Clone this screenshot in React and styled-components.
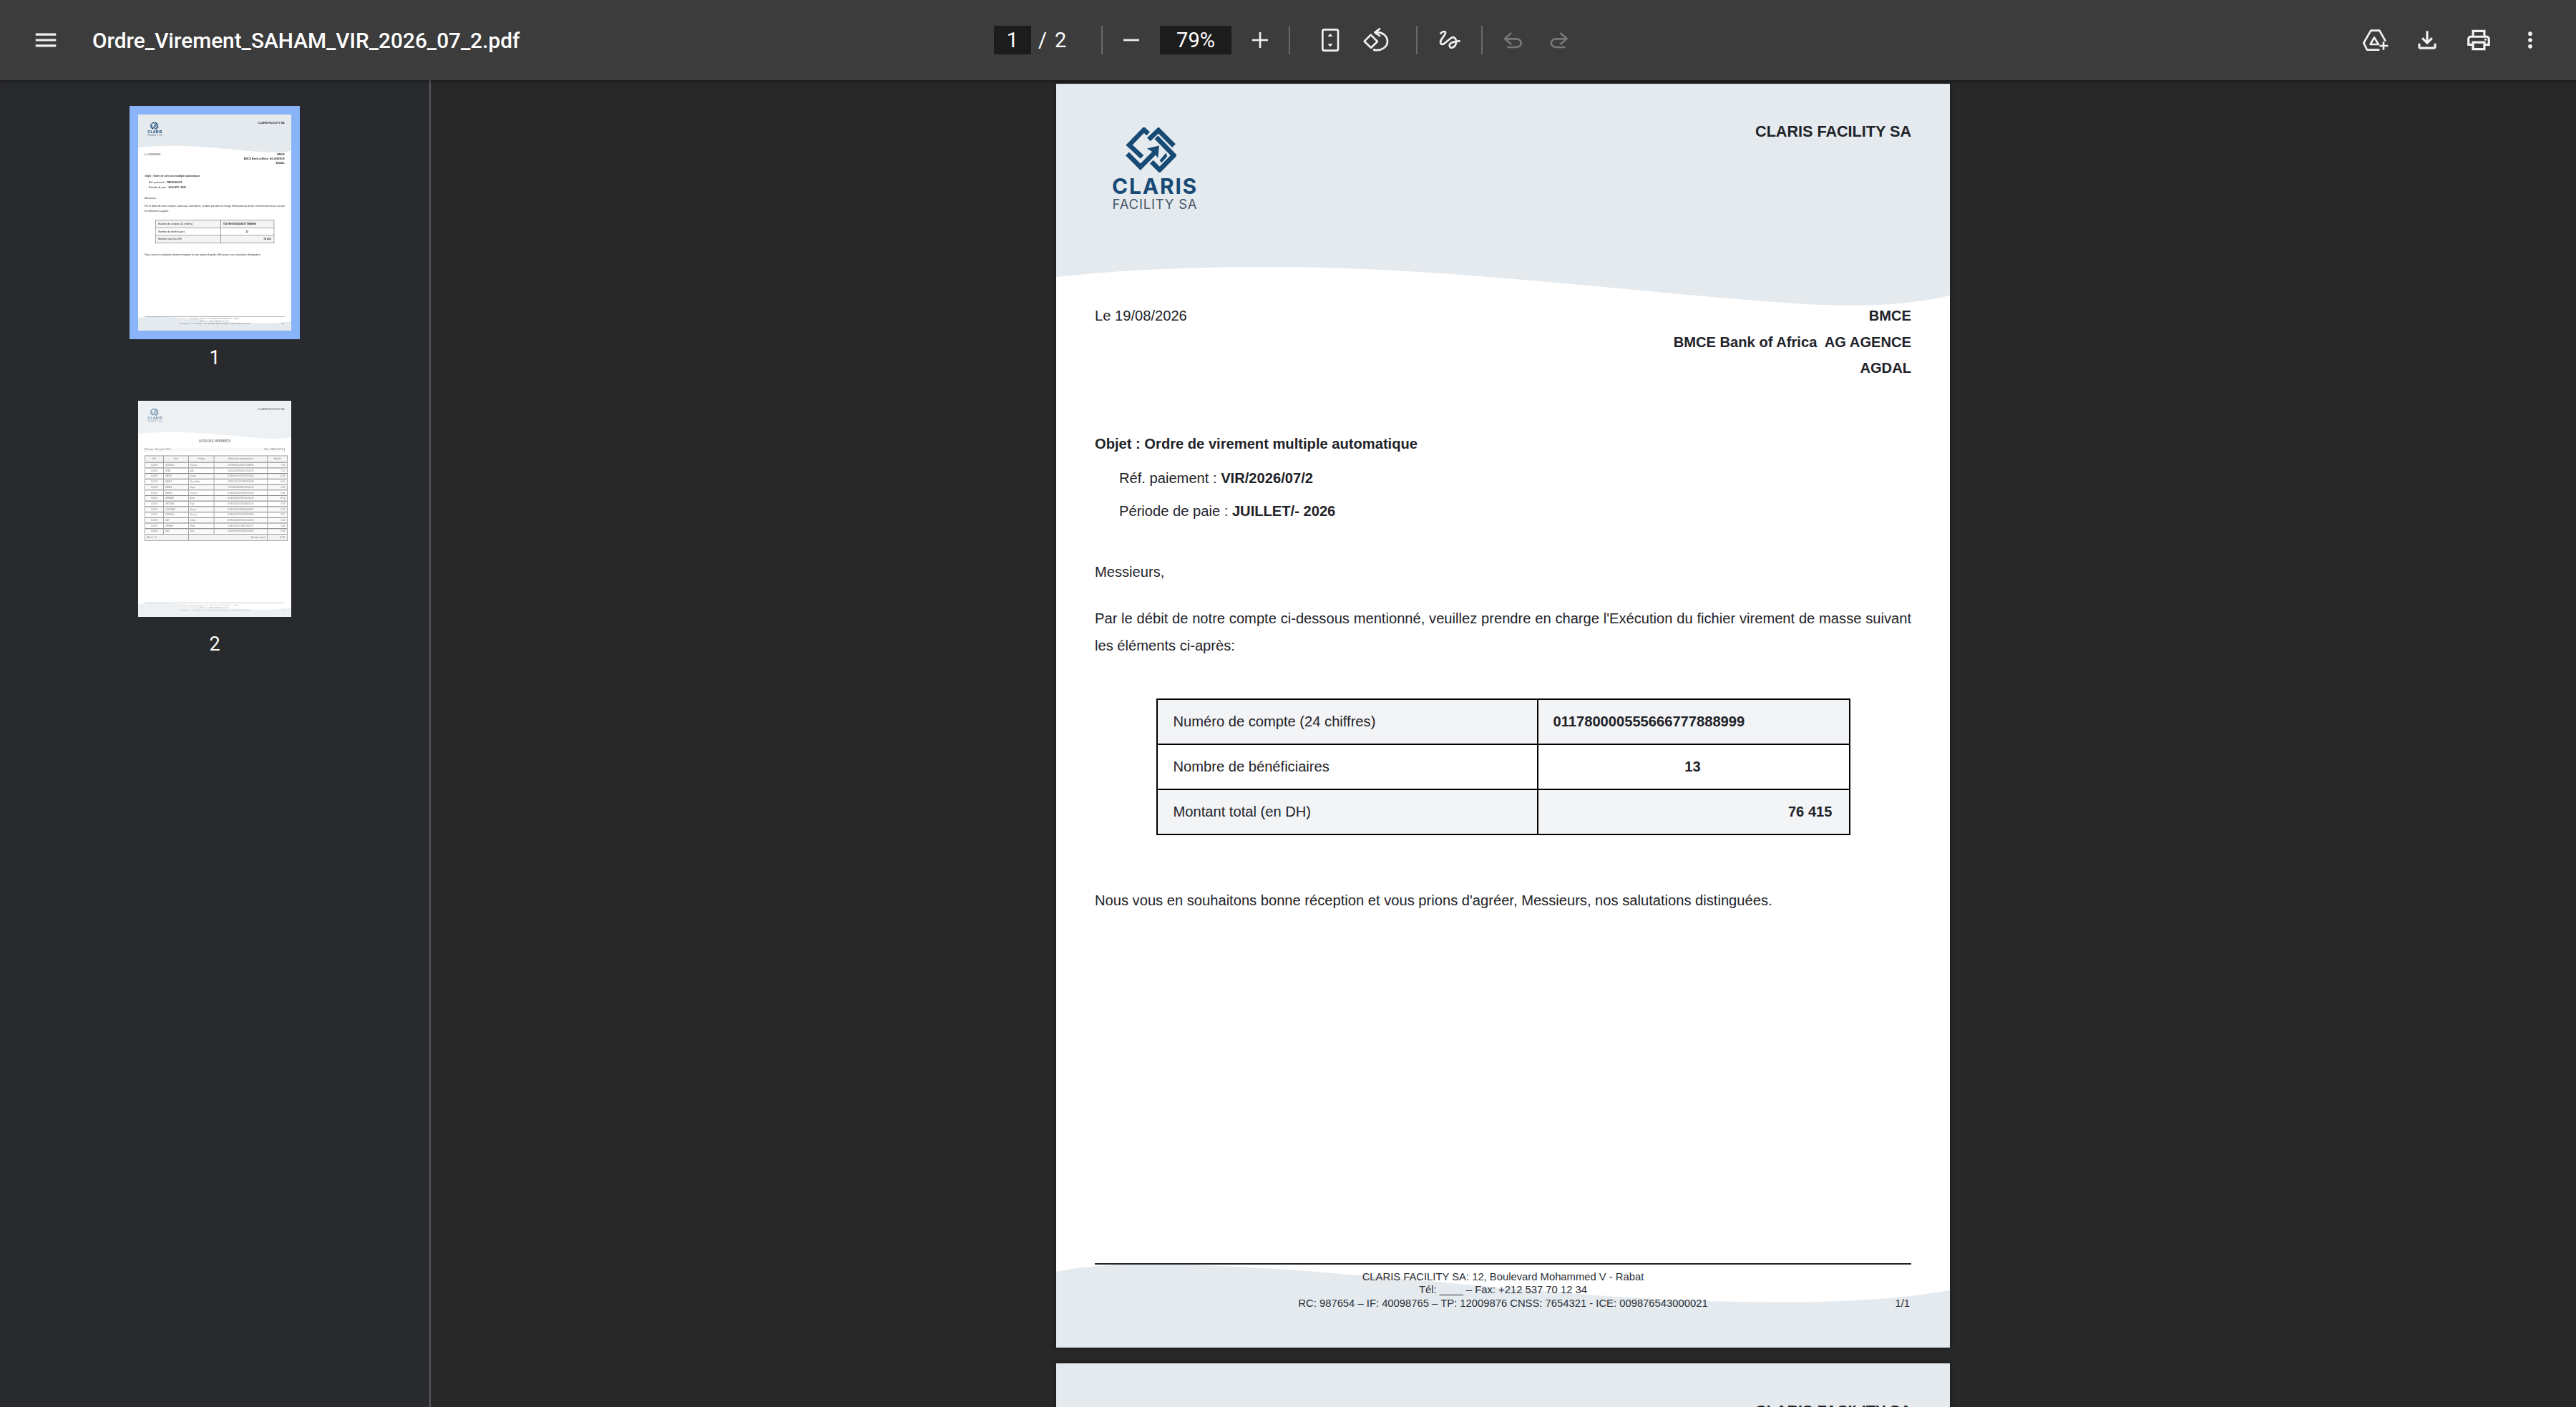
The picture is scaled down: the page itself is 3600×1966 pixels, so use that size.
import React from 'react';
import styled, { createGlobalStyle } from 'styled-components';

const GlobalStyle = createGlobalStyle`
	html, body {
		margin: 0;
		padding: 0;
		height: 100%;
		background: #282828;
	}
`;

const Shell = styled.div`
	display: flex;
	flex-direction: column;
	height: 100vh;
	overflow: hidden;
	font-family: Roboto, 'Liberation Sans', sans-serif;
`;

/* toolbar */
const Toolbar = styled.header`
	position: relative;
	z-index: 2;
	flex: 0 0 112px;
	display: flex;
	align-items: center;
	background: #3c3c3c;
	color: #fff;
	box-shadow: 0 2px 5px rgba(0, 0, 0, 0.35);
`;

const TitleGroup = styled.div`
	flex: 0 0 1389px;
	display: flex;
	align-items: center;
	padding-left: 45px;
	box-sizing: border-box;
`;

const FileName = styled.div`
	margin-left: 46px;
	font-size: 29.8px;
	font-weight: 500;
	white-space: nowrap;
`;

const CenterGroup = styled.div`
	display: flex;
	align-items: center;
`;

const RightGroup = styled.div`
	display: flex;
	align-items: center;
	margin-left: auto;
	padding-right: 28px;
`;

const NumberBox = styled.div`
	display: flex;
	align-items: center;
	justify-content: center;
	width: ${props => props.$width}px;
	height: 40px;
	margin: 0 ${props => props.$gap || 0}px;
	background: #1c1c1c;
	font-size: 29px;
`;

const PageCount = styled.div`
	display: flex;
	width: 98px;
	padding-left: 10px;
	gap: 11px;
	box-sizing: border-box;
	font-size: 29px;
`;

const Separator = styled.div`
	width: 2px;
	height: 40px;
	margin: 0 ${props => props.$right}px 0 ${props => props.$left}px;
	background: #6a6a6a;
`;

const IconSlot = styled.div`
	display: flex;
	align-items: center;
	justify-content: center;
	width: ${props => props.$width || 64}px;
	height: 64px;
`;

const Glyph = styled.svg`
	width: 40px;
	height: 40px;
	fill: none;
	stroke: ${props => (props.$off ? '#787878' : '#f1f1f1')};
	stroke-width: 8;
	stroke-linecap: round;
	stroke-linejoin: round;
`;

const SolidGlyph = styled.svg`
	width: 38px;
	height: 38px;
	fill: #f1f1f1;
`;

/* main area */
const Main = styled.div`
	flex: 1;
	display: flex;
	min-height: 0;
`;

const Sidebar = styled.aside`
	flex: 0 0 600px;
	display: flex;
	flex-direction: column;
	align-items: center;
	gap: 22px;
	padding-top: 36px;
	border-right: 2px solid #585858;
	background: #292a2d;
`;

const ThumbItem = styled.div`
	display: flex;
	flex-direction: column;
	align-items: center;
`;

const ThumbFrame = styled.div`
	width: 214px;
	height: 302px;
	border: 12px solid ${props => (props.$active ? '#8ab4f8' : 'transparent')};
	background: #fff;
	background-clip: padding-box;
	overflow: hidden;
`;

const ThumbScale = styled.div`
	width: 1249px;
	transform: scale(0.1713);
	transform-origin: 0 0;
	opacity: ${props => (props.$faded ? 0.62 : 1)};
	filter: blur(1.5px);
`;

const ThumbLabel = styled.div`
	height: 52px;
	line-height: 52px;
	font-size: 27px;
	color: #fff;
`;

const Viewer = styled.main`
	flex: 1;
	display: flex;
	flex-direction: column;
	align-items: center;
	gap: 22px;
	padding: 5px 1px 0 0;
	overflow: hidden;
`;

/* pdf page */
const Sheet = styled.section`
	position: relative;
	flex: 0 0 1766px;
	width: 1249px;
	height: 1766px;
	background: #fff;
	color: #1f2329;
	font-family: 'Liberation Sans', Arial, sans-serif;
	font-size: 20.15px;
	box-shadow: 0 0 6px rgba(0, 0, 0, 0.5);
`;

const Backdrop = styled.svg`
	position: absolute;
	inset: 0;
	width: 100%;
	height: 100%;
`;

const SheetBody = styled.div`
	position: relative;
	display: flex;
	flex-direction: column;
	height: 100%;
	padding: 0 54px 53px;
	box-sizing: border-box;
`;

const SheetHeader = styled.div`
	flex: 0 0 306px;
	display: flex;
	justify-content: space-between;
	align-items: flex-start;
	padding-top: 48px;
	box-sizing: border-box;
`;

const Brand = styled.div`
	display: flex;
	flex-direction: column;
	align-items: center;
	width: 122px;
	margin: 13px 0 0 23px;
`;

const BrandMark = styled.svg`
	width: 71px;
	height: 63px;
	margin-left: -12px;
	fill: #174a75;
	stroke: #174a75;
`;

const BrandName = styled.div`
	margin-top: 4px;
	font-family: Inter, sans-serif;
	font-size: 30px;
	line-height: 30px;
	font-weight: 700;
	letter-spacing: 1.8px;
	color: #174a75;
`;

const BrandSub = styled.div`
	font-family: Inter, sans-serif;
	font-size: 18.5px;
	line-height: 20px;
	letter-spacing: 0.8px;
	color: #46566a;
`;

const CompanyName = styled.div`
	font-size: 21.6px;
	line-height: 38px;
	font-weight: 700;
`;

const AddressRow = styled.div`
	display: flex;
	justify-content: space-between;
	line-height: 36.5px;
`;

const Recipient = styled.div`
	text-align: right;
	font-weight: 700;
	white-space: pre-wrap;
`;

const Line = styled.div`
	line-height: 38px;
	margin-top: ${props => props.$top || 0}px;
	padding-left: ${props => props.$indent || 0}px;
	text-align: ${props => props.$align || 'left'};
`;

const Bold = styled.b`
	font-weight: 700;
`;

const SummaryTable = styled.table`
	width: 970px;
	margin: 55px auto 0;
	border-collapse: collapse;
	border: 2px solid #000;
	table-layout: fixed;
`;

const SummaryRow = styled.tr`
	height: 63px;
	background: ${props => (props.$shaded ? '#f3f4f6' : '#fff')};
	border-top: 2px solid #000;
`;

const SummaryLabel = styled.td`
	width: 532px;
	padding: 0 22px;
	border-right: 2px solid #000;
	box-sizing: border-box;
`;

const SummaryValue = styled.td`
	padding: 0 23px 0 21px;
	font-weight: 700;
	text-align: ${props => props.$align || 'left'};
`;

const SheetFooter = styled.footer`
	margin-top: auto;
	padding-top: 8px;
	border-top: 2px solid #1f2329;
	font-size: 14.8px;
	line-height: 18.5px;
	text-align: center;
	color: #2a2f36;
`;

const FooterLast = styled.div`
	display: grid;
	grid-template-columns: 1fr auto 1fr;
`;

const FooterPage = styled.span`
	text-align: right;
	padding-right: 2px;
`;

/* second page list */
const ListTitle = styled.div`
	line-height: 34px;
	font-weight: 700;
	font-size: 23px;
	text-align: center;
	text-decoration: underline;
`;

const PeriodRow = styled.div`
	display: flex;
	justify-content: space-between;
	align-items: center;
	height: 30px;
	margin-top: 44px;
	padding: 0 4px;
	background: #f3f5f8;
	border: solid #444;
	border-width: 0 3px;
	font-size: 18px;
`;

const ListTable = styled.table`
	width: 100%;
	margin-top: 33px;
	border-collapse: collapse;
	table-layout: fixed;
	font-size: 16px;
`;

const ListHead = styled.th`
	height: 49px;
	padding: 0;
	border: 4px solid #333;
	background: #eceded;
	font-weight: 400;
	width: ${props => props.$width}px;
`;

const ListCell = styled.td`
	height: 45px;
	padding: 0 12px;
	border: solid #333;
	border-width: 6px 4px 0;
	text-align: ${props => props.$align || 'left'};
	background: ${props => (props.$shaded ? '#f6f6f6' : '#fff')};
	box-sizing: border-box;
`;

const ListTotal = styled.td`
	height: 48px;
	padding: 0 12px;
	border: 4px solid #333;
	background: #eceded;
	text-align: ${props => props.$align || 'left'};
`;

const transfers = [
	['100087', 'GUIMLALI', 'Yassine', '011780000555666777888914', '7 500'],
	['100086', 'SEBTI', 'Adil', '011620000789456123000273', '7 070'],
	['100085', 'ZAHIDI', 'Souad', '022640000123456789123456', '11 800'],
	['100053', 'FARAJI', 'Noureddine', '011810000147258369000328', '6 061'],
	['100058', 'FARAJI', 'Rajaa', '145780000963852741000416', '5 800'],
	['100050', 'HAKIMI', 'Youssef', '007640000321654987000523', '6 600'],
	['100051', 'JERRARI', 'Amal', '022450000654987321000618', '6 500'],
	['100059', 'GETTASS', 'Said', '007810000159357486000734', '4 500'],
	['100061', 'OUAZZANI', 'Hasna', '007670000753951456000841', '4 700'],
	['100055', 'GUIMLALI', 'Hassan', '022640000258147369000959', '4 814'],
	['100056', 'TAZI', 'Salma', '007810000369258147000166', '5 000'],
	['100041', 'GHRAIBI', 'Reda', '230810000456789123000272', '3 480'],
	['100006', 'TAZI', 'Ilyas', '011640000987654321000387', '2 590']
];

const Logo = () => (
	<Brand>
		<BrandMark viewBox="155 83 213 190">
			<g fill="none" strokeWidth="20">
				<path d="M250 110 L232 93 L170 157 L224 208" />
				<path d="M162 194 L217 250 L284 182" />
				<path d="M252 134 L293 95 L358 160" />
				<path d="M284 125 L358 201 L298 262 L264 228" />
			</g>
			<polygon stroke="none" points="245,172 296,160 291,212 274,190" />
			<polygon stroke="none" points="298,222 325,190 330,205 306,232" />
		</BrandMark>
		<BrandName>CLARIS</BrandName>
		<BrandSub>FACILITY SA</BrandSub>
	</Brand>
);

const Page = ({ children }) => (
	<Sheet>
		<Backdrop viewBox="0 0 1249 1766">
			<path
				fill="#e5eaee"
				d="M0 0 H1249 V296 C1180 312 1110 311 1047 308 C800 292 560 256 294 256 C190 256 90 260 0 270 Z"
			/>
			<path
				fill="#e5eaee"
				d="M0 1660 C40 1652 90 1649 132 1649 C400 1652 700 1700 966 1702 C1070 1704 1170 1700 1249 1686 V1766 H0 Z"
			/>
		</Backdrop>
		<SheetBody>
			<SheetHeader>
				<Logo />
				<CompanyName>CLARIS FACILITY SA</CompanyName>
			</SheetHeader>
			{children}
			<SheetFooter>
				<div>CLARIS FACILITY SA: 12, Boulevard Mohammed V - Rabat</div>
				<div>Tél: ____ – Fax: +212 537 70 12 34</div>
				<FooterLast>
					<span />
					<span>RC: 987654 – IF: 40098765 – TP: 12009876 CNSS: 7654321 - ICE: 009876543000021</span>
					<FooterPage>1/1</FooterPage>
				</FooterLast>
			</SheetFooter>
		</SheetBody>
	</Sheet>
);

const LetterContent = () => (
	<>
		<AddressRow>
			<div>Le 19/08/2026</div>
			<Recipient>
				BMCE
				<br />
				BMCE Bank of Africa  AG AGENCE
				<br />
				AGDAL
			</Recipient>
		</AddressRow>
		<Line $top={68}>
			<Bold>Objet : Ordre de virement multiple automatique</Bold>
		</Line>
		<Line $top={10} $indent={34}>
			Réf. paiement : <Bold>VIR/2026/07/2</Bold>
		</Line>
		<Line $top={8} $indent={34}>
			Période de paie : <Bold>JUILLET/- 2026</Bold>
		</Line>
		<Line $top={47}>Messieurs,</Line>
		<Line $top={27} $align="justify">
			Par le débit de notre compte ci-dessous mentionné, veuillez prendre en charge l'Exécution du fichier virement
			de masse suivant les éléments ci-après:
		</Line>
		<SummaryTable>
			<tbody>
				<SummaryRow $shaded>
					<SummaryLabel>Numéro de compte (24 chiffres)</SummaryLabel>
					<SummaryValue>011780000555666777888999</SummaryValue>
				</SummaryRow>
				<SummaryRow>
					<SummaryLabel>Nombre de bénéficiaires</SummaryLabel>
					<SummaryValue $align="center">13</SummaryValue>
				</SummaryRow>
				<SummaryRow $shaded>
					<SummaryLabel>Montant total (en DH)</SummaryLabel>
					<SummaryValue $align="right">76 415</SummaryValue>
				</SummaryRow>
			</tbody>
		</SummaryTable>
		<Line $top={72}>
			Nous vous en souhaitons bonne réception et vous prions d'agréer, Messieurs, nos salutations distinguées.
		</Line>
	</>
);

const ListContent = () => (
	<>
		<ListTitle>LISTE DES VIREMENTS</ListTitle>
		<PeriodRow>
			<span>Période : Paie juillet 2026</span>
			<span>Réf : VIR/2026/07/2</span>
		</PeriodRow>
		<ListTable>
			<thead>
				<tr>
					<ListHead $width={148}>Mle</ListHead>
					<ListHead $width={199}>Nom</ListHead>
					<ListHead $width={204}>Prénom</ListHead>
					<ListHead $width={432}>Numéro de compte bancaire</ListHead>
					<ListHead $width={158}>Montant</ListHead>
				</tr>
			</thead>
			<tbody>
				{transfers.map((row, index) => (
					<tr key={row[0]}>
						<ListCell $align="center" $shaded={index % 2 === 0}>{row[0]}</ListCell>
						<ListCell $shaded={index % 2 === 0}>{row[1]}</ListCell>
						<ListCell $shaded={index % 2 === 0}>{row[2]}</ListCell>
						<ListCell $align="center" $shaded={index % 2 === 0}>{row[3]}</ListCell>
						<ListCell $align="right" $shaded={index % 2 === 0}>{row[4]}</ListCell>
					</tr>
				))}
				<tr>
					<ListTotal colSpan={2}>Effectif : 13</ListTotal>
					<ListTotal colSpan={2} $align="right">Total du virement</ListTotal>
					<ListTotal $align="right">76 415</ListTotal>
				</tr>
			</tbody>
		</ListTable>
	</>
);

const App = () => (
	<Shell>
		<GlobalStyle />
		<Toolbar>
			<TitleGroup>
				<SolidGlyph viewBox="0 0 24 24">
					<path d="M3 18h18v-2H3v2zm0-5h18v-2H3v2zm0-7v2h18V6H3z" />
				</SolidGlyph>
				<FileName>Ordre_Virement_SAHAM_VIR_2026_07_2.pdf</FileName>
			</TitleGroup>
			<CenterGroup>
				<NumberBox $width={52}>1</NumberBox>
				<PageCount>
					<span>/</span>
					<span>2</span>
				</PageCount>
				<Separator $left={0} $right={8} />
				<IconSlot>
					<Glyph viewBox="0 0 120 120">
						<path d="M27 60 H93" strokeLinecap="butt" />
					</Glyph>
				</IconSlot>
				<NumberBox $width={100} $gap={8}>79%</NumberBox>
				<IconSlot>
					<Glyph viewBox="0 0 120 120">
						<path d="M27 60 H93 M60 27 V93" strokeLinecap="butt" />
					</Glyph>
				</IconSlot>
				<Separator $left={8} $right={24} />
				<IconSlot>
					<Glyph viewBox="27 17 120 120">
						<rect x="55" y="33" width="65" height="88" rx="7" />
						<path d="M87 50 L98 62 H76 Z M87 105 L98 93 H76 Z" fill="#f1f1f1" stroke="none" />
					</Glyph>
				</IconSlot>
				<IconSlot>
					<Glyph viewBox="217 20 120 120">
						<path d="M228 85 L255 58 L283 86 L256 112 Z" />
						<path d="M292 33 L272 48 L292 62 M275 48 C305 44 325 65 325 85 C325 108 300 128 268 121" />
					</Glyph>
				</IconSlot>
				<Separator $left={24} $right={13} />
				<IconSlot>
					<Glyph viewBox="525 20 120 120">
						<path d="M547 52 C556 42 572 40 566 54 C560 68 540 82 548 95 C556 106 575 82 590 72 C604 62 618 78 610 98 C604 114 584 118 584 102 C584 90 605 86 626 84" />
					</Glyph>
				</IconSlot>
				<Separator $left={12} $right={10} />
				<IconSlot>
					<Glyph $off viewBox="795 20 120 120">
						<path d="M847 52 L822 74 L847 96 M822 75 H870 A20 17 0 0 1 870 110 H835" />
					</Glyph>
				</IconSlot>
				<IconSlot>
					<Glyph $off viewBox="985 20 120 120">
						<path d="M1055 52 L1080 74 L1055 96 M1080 75 H1035 A20 17 0 0 0 1035 110 H1070" />
					</Glyph>
				</IconSlot>
			</CenterGroup>
			<RightGroup>
				<IconSlot $width={72}>
					<Glyph viewBox="182 108 120 120">
						<path d="M255 209 H206 L192 180 L222 128 H258 L282 170" />
						<path d="M236 157 L220 186 H254 Z" />
						<path d="M275 175 V209 M258 192 H294" strokeLinecap="butt" />
					</Glyph>
				</IconSlot>
				<IconSlot $width={72}>
					<SolidGlyph viewBox="0 0 24 24">
						<path d="M12 16l-5-5 1.4-1.45 2.6 2.6V4h2v8.15l2.6-2.6L17 11l-5 5zm-6 4q-.825 0-1.412-.587T4 18v-3h2v3h12v-3h2v3q0 .825-.587 1.413T18 20H6z" />
					</SolidGlyph>
				</IconSlot>
				<IconSlot $width={72}>
					<SolidGlyph viewBox="0 0 24 24">
						<path d="M19 8h-1V3H6v5H5c-1.66 0-3 1.34-3 3v6h4v4h12v-4h4v-6c0-1.66-1.34-3-3-3zM8 5h8v3H8V5zm8 14H8v-4h8v4zm4-4h-2v-2H6v2H4v-4c0-.55.45-1 1-1h14c.55 0 1 .45 1 1v4z" />
						<circle cx="18" cy="11.5" r="1" />
					</SolidGlyph>
				</IconSlot>
				<IconSlot $width={72}>
					<SolidGlyph viewBox="0 0 24 24">
						<circle cx="12" cy="6.4" r="1.8" />
						<circle cx="12" cy="12" r="1.8" />
						<circle cx="12" cy="17.6" r="1.8" />
					</SolidGlyph>
				</IconSlot>
			</RightGroup>
		</Toolbar>
		<Main>
			<Sidebar>
				<ThumbItem>
					<ThumbFrame $active>
						<ThumbScale>
							<Page>
								<LetterContent />
							</Page>
						</ThumbScale>
					</ThumbFrame>
					<ThumbLabel>1</ThumbLabel>
				</ThumbItem>
				<ThumbItem>
					<ThumbFrame>
						<ThumbScale $faded>
							<Page>
								<ListContent />
							</Page>
						</ThumbScale>
					</ThumbFrame>
					<ThumbLabel>2</ThumbLabel>
				</ThumbItem>
			</Sidebar>
			<Viewer>
				<Page>
					<LetterContent />
				</Page>
				<Page>
					<ListContent />
				</Page>
			</Viewer>
		</Main>
	</Shell>
);

export default App;
